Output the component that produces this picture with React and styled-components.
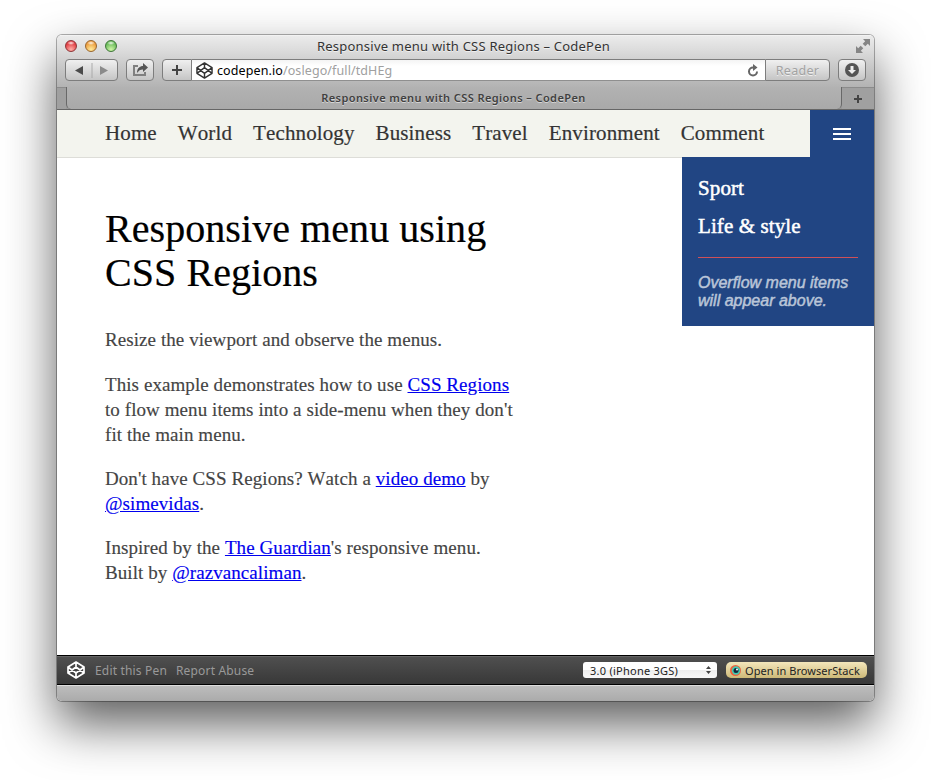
import React from "react";
import styled, { createGlobalStyle } from "styled-components";

const GlobalStyle = createGlobalStyle`
  * { box-sizing: border-box; }
  body { margin: 0; background: #fff; font-family: "Liberation Serif", "Times New Roman", serif; font-kerning: none; }
`;

const ui = `"Noto Sans", "Open Sans", sans-serif`;

const Desktop = styled.div`
  width: 931px;
  height: 780px;
  padding: 35px 0 0 57px;
  overflow: hidden;
`;

const Window = styled.div`
  width: 817px;
  height: 666px;
  display: flex;
  flex-direction: column;
  border-radius: 5px;
  overflow: hidden;
  background: #fff;
  box-shadow: 0 0 0 1px rgba(0, 0, 0, 0.3), 0 23px 50px 0 rgba(0, 0, 0, 0.64);
`;

const Chrome = styled.header`
  height: 75px;
  flex: none;
  display: flex;
  flex-direction: column;
  font-family: ${ui};
  background: linear-gradient(#ebebeb 0, #dcdcdc 14px, #c9c9c9 30px, #b2b2b2 52px, #a9a9a9 74px);
  border-top: 1px solid #f2f2f2;
  border-bottom: 1px solid #666;
`;

const TitleBar = styled.div`
  height: 22px;
  display: grid;
  grid-template-columns: 66px 1fr 74px;
  align-items: center;
  padding: 0 4px 0 8px;
`;

const Lights = styled.div`
  display: flex;
  gap: 8px;
  margin-top: -2px;
`;

const Light = styled.span`
  width: 12px;
  height: 12px;
  border-radius: 50%;
  border: 1px solid ${(p) => p.$edge};
  background:
    radial-gradient(ellipse 4px 2px at 50% 20%, rgba(255, 255, 255, 0.9), transparent),
    radial-gradient(circle at 50% 85%, ${(p) => p.$glow}, ${(p) => p.$color} 70%);
`;

const WindowTitle = styled.div`
  margin-top: -2px;
  text-align: center;
  font-size: 13px;
  letter-spacing: 0.22px;
  line-height: 20px;
  color: #333;
  white-space: nowrap;
  text-shadow: 0 1px 0 rgba(255, 255, 255, 0.6);
`;

const Expand = styled.svg`
  justify-self: end;
  width: 14px;
  height: 14px;
  margin-top: -2px;
`;

const Toolbar = styled.div`
  height: 29px;
  display: flex;
  align-items: flex-start;
  padding: 1px 8px 0;
`;

const Button = styled.button`
  width: ${(p) => p.$width}px;
  height: 22px;
  margin: 0 ${(p) => p.$after || 0}px 0 0;
  padding: 0;
  display: flex;
  align-items: center;
  justify-content: center;
  border: 1px solid #7d7d7d;
  border-radius: ${(p) => p.$radius || "4px"};
  background: linear-gradient(#f0f0f0, #c5c5c5);
  color: #a2a2a2;
  font: 12.5px ${ui};
  letter-spacing: 0.3px;
  text-shadow: 0 1px 0 #eee;
`;

const AddressBar = styled.div`
  flex: 1;
  height: 22px;
  display: flex;
  align-items: center;
  padding: 0 6px 0 4px;
  background: linear-gradient(#f4f4f4, #fff 6px);
  border-top: 1px solid #7d7d7d;
  border-bottom: 1px solid #8f8f8f;
`;

const Url = styled.span`
  flex: 1;
  padding: 1px 0 0 4px;
  font-size: 12.5px;
  letter-spacing: 0.1px;
  line-height: 21px;
  color: #a0a0a0;
`;

const Domain = styled.span`
  color: #000;
`;

const TabBar = styled.div`
  height: 22px;
  display: flex;
  border-top: 1px solid #8b8b8b;
  background: #999;
`;

const TabEnd = styled.div`
  width: ${(p) => p.$width}px;
  display: flex;
  align-items: center;
  justify-content: center;
  background: #a0a0a0;
`;

const ActiveTab = styled.div`
  flex: 1;
  margin-top: -1px;
  padding-right: 1px;
  text-align: center;
  font-size: 11px;
  font-weight: 600;
  letter-spacing: 0.41px;
  line-height: 21px;
  color: #404040;
  text-shadow: 0 1px 0 rgba(255, 255, 255, 0.5);
  background: linear-gradient(#b2b2b2, #a9a9a9);
  border: solid #686868;
  border-width: 0 1px;
  border-radius: 0 0 5px 5px;
`;

const Page = styled.div`
  height: 545px;
  flex: none;
`;

const NavBar = styled.nav`
  height: 48px;
  display: flex;
  background: #f3f4ee;
  border-bottom: 1px solid #ddddd8;
`;

const NavList = styled.div`
  flex: 1;
  display: flex;
  gap: 21px;
  padding-left: 48px;
`;

const NavItem = styled.a`
  font-size: 21px;
  letter-spacing: 0.12px;
  line-height: 46px;
  color: #333;
  white-space: nowrap;
  -webkit-text-stroke: 0.2px #333;
`;

const MenuButton = styled.button`
  width: 64px;
  height: 48px;
  padding: 0;
  border: 0;
  display: flex;
  flex-direction: column;
  align-items: center;
  justify-content: center;
  gap: 3px;
  background: #214583;
`;

const MenuBar = styled.span`
  width: 18px;
  height: 2px;
  background: #fff;
`;

const Body = styled.div`
  display: flex;
  justify-content: space-between;
  align-items: flex-start;
`;

const Article = styled.main`
  width: 460px;
  padding: 49px 0 0 48px;
`;

const Heading = styled.h1`
  margin: 0 0 32.3px;
  font-size: 40px;
  font-weight: 400;
  letter-spacing: 0.06px;
  line-height: 44px;
  color: #000;
  white-space: nowrap;
  -webkit-text-stroke: 0.2px #000;
`;

const Paragraph = styled.p`
  margin: 0 0 19.33px;
  font-size: 19px;
  letter-spacing: 0.075px;
  line-height: 25px;
  color: #444;
  white-space: nowrap;
  -webkit-text-stroke: 0.15px currentColor;
`;

const Link = styled.a`
  color: #0000ee;
  text-decoration: underline;
`;

const SideMenu = styled.aside`
  width: 192px;
  height: 169px;
  margin-top: -1px;
  padding: 12px 16px;
  background: #214583;
`;

const SideItem = styled.a`
  display: block;
  font-size: 21px;
  letter-spacing: 0.1px;
  line-height: 38px;
  color: #fff;
  -webkit-text-stroke: 0.5px #fff;
`;

const Note = styled.p`
  margin: 12px 0 0;
  padding-top: 16px;
  border-top: 1px solid #cf5058;
  font: italic 16px/18px "Liberation Sans", Arial, sans-serif;
  color: #bac5d8;
  -webkit-text-stroke: 0.5px #bac5d8;
  white-space: nowrap;
`;

const PenBar = styled.footer`
  height: 30px;
  flex: none;
  display: flex;
  align-items: center;
  padding: 0 7px 0 10px;
  border-top: 1px solid #000;
  border-bottom: 1px solid #000;
  box-shadow: inset 0 1px #656565;
  background: linear-gradient(#505050, #383838);
  font-family: ${ui};
`;

const PenLink = styled.a`
  margin-left: ${(p) => p.$before}px;
  font-size: 12px;
  letter-spacing: 0.17px;
  color: #999;
  white-space: nowrap;
`;

const Spacer = styled.div`
  flex: 1;
`;

const Select = styled.div`
  width: 134px;
  height: 16px;
  margin-right: 9px;
  padding: 0 6px 0 7px;
  display: flex;
  align-items: center;
  justify-content: space-between;
  border-radius: 3px;
  background: linear-gradient(#fff, #fff 50%, #ededed 50%, #f8f8f8);
  font-size: 11px;
  letter-spacing: 0.25px;
  color: #222;
`;

const StackButton = styled.button`
  width: 141px;
  height: 16px;
  padding: 0 0 0 4px;
  border: 0;
  border-radius: 5px;
  display: flex;
  align-items: center;
  gap: 4px;
  background: linear-gradient(#f3e6bb, #cdb978);
  font: 11px ${ui};
  letter-spacing: 0.06px;
  color: #222;
  white-space: nowrap;
`;

const StatusBar = styled.div`
  flex: 1;
  border-top: 1px solid #dcdcdc;
  border-bottom: 1px solid #aaa;
  background: linear-gradient(#bcbcbc, #acacac);
`;

const CodePenIcon = ({ size, color, weight = 1.7 }) => (
  <svg width={size} height={size} viewBox="0 0 18 18" fill="none" stroke={color} strokeWidth={weight} strokeLinejoin="round">
    <path d="M9 1 17 6v6L9 17 1 12V6ZM1 6l8 6 8-6M1 12l8-6 8 6M9 1v5M9 12v5" />
  </svg>
);

const nav = ["Home", "World", "Technology", "Business", "Travel", "Environment", "Comment"];

export default function App() {
  return (
    <Desktop>
      <GlobalStyle />
      <Window>
        <Chrome>
          <TitleBar>
            <Lights>
              <Light $edge="#8d3437" $color="#e0393f" $glow="#ffb0a8" />
              <Light $edge="#98652c" $color="#ec9b3c" $glow="#ffec9c" />
              <Light $edge="#3e7538" $color="#66b957" $glow="#d0f6a8" />
            </Lights>
            <WindowTitle>Responsive menu with CSS Regions – CodePen</WindowTitle>
            <Expand viewBox="0 0 14 14" fill="#858585">
              <path d="M7 0h7v7l-2.200-2.200-2.500 2.500L6.700 4.700 9.200 2.200ZM7 14H0V7l2.200 2.200 2.500-2.500L7.300 9.300 4.800 11.800Z" />
            </Expand>
          </TitleBar>
          <Toolbar>
            <Button $width={53} $after={8}>
              <svg width="51" height="20">
                <path d="M17 6v9l-8-4.500Z" fill="#4b4b4b" />
                <path d="M26 3v15" stroke="#aaa" />
                <path d="M34 6v9l8-4.500Z" fill="#8b8b8b" />
              </svg>
            </Button>
            <Button $width={28} $after={8}>
              <svg width="18" height="16" fill="none" stroke="#808080" strokeWidth="2">
                <path d="M7 4H3v9h11v-3" />
                <path d="M6 11c0-5 3-7 6-7V1l5 4.500-5 4.500V7.500c-3 0-4 1-6 3.500Z" fill="#555" stroke="none" />
              </svg>
            </Button>
            <Button $width={30} $radius="4px 0 0 4px">
              <svg width="12" height="12"><path d="M6 1v10M1 6h10" stroke="#444" strokeWidth="2" /></svg>
            </Button>
            <AddressBar>
              <CodePenIcon size={17} color="#333" weight={1.5} />
              <Url><Domain>codepen.io</Domain>/oslego/full/tdHEg</Url>
              <svg width="12" height="13" fill="none" stroke="#666" strokeWidth="2">
                <path d="M7 3.500H6A4 4 0 1 0 10 7.500" />
                <path d="M6 0l4.500 3.500L6 7Z" fill="#666" stroke="none" />
              </svg>
            </AddressBar>
            <Button $width={65} $after={8} $radius="0 4px 4px 0">Reader</Button>
            <Button $width={28}>
              <svg width="14" height="14">
                <circle cx="7" cy="7" r="7" fill="#555" />
                <path d="M5.500 3h3v4H11l-4 4-4-4h2.500Z" fill="#eee" />
              </svg>
            </Button>
          </Toolbar>
          <TabBar>
            <TabEnd $width={9} />
            <ActiveTab>Responsive menu with CSS Regions – CodePen</ActiveTab>
            <TabEnd $width={32}>
              <svg width="8" height="8"><path d="M4 0v8M0 4h8" stroke="#444" strokeWidth="2" /></svg>
            </TabEnd>
          </TabBar>
        </Chrome>
        <Page>
          <NavBar>
            <NavList>{nav.map((n) => <NavItem key={n}>{n}</NavItem>)}</NavList>
            <MenuButton aria-label="Menu"><MenuBar /><MenuBar /><MenuBar /></MenuButton>
          </NavBar>
          <Body>
            <Article>
              <Heading>Responsive menu using<br />CSS Regions</Heading>
              <Paragraph>Resize the viewport and observe the menus.</Paragraph>
              <Paragraph>This example demonstrates how to use <Link>CSS Regions</Link><br />to flow menu items into a side-menu when they don't<br />fit the main menu.</Paragraph>
              <Paragraph>Don't have CSS Regions? Watch a <Link>video demo</Link> by<br /><Link>@simevidas</Link>.</Paragraph>
              <Paragraph>Inspired by the <Link>The Guardian</Link>'s responsive menu.<br />Built by <Link>@razvancaliman</Link>.</Paragraph>
            </Article>
            <SideMenu>
              <SideItem>Sport</SideItem>
              <SideItem>Life &amp; style</SideItem>
              <Note>Overflow menu items<br />will appear above.</Note>
            </SideMenu>
          </Body>
        </Page>
        <PenBar>
          <CodePenIcon size={18} color="#fff" />
          <PenLink $before={10}>Edit this Pen</PenLink>
          <PenLink $before={9}>Report Abuse</PenLink>
          <Spacer />
          <Select>
            3.0 (iPhone 3GS)
            <svg width="5" height="8" fill="#444"><path d="M0 3 2.500 0 5 3ZM0 5l2.500 3L5 5Z" /></svg>
          </Select>
          <StackButton>
            <svg width="11" height="11">
              <circle cx="5.500" cy="5.500" r="5.500" fill="#f0603c" />
              <circle cx="6" cy="5.500" r="4.200" fill="#45c8b0" />
              <circle cx="6" cy="5.500" r="2.500" fill="#142a3c" />
              <circle cx="7" cy="4.500" r="1" fill="#fff" />
            </svg>
            Open in BrowserStack
          </StackButton>
        </PenBar>
        <StatusBar />
      </Window>
    </Desktop>
  );
}
